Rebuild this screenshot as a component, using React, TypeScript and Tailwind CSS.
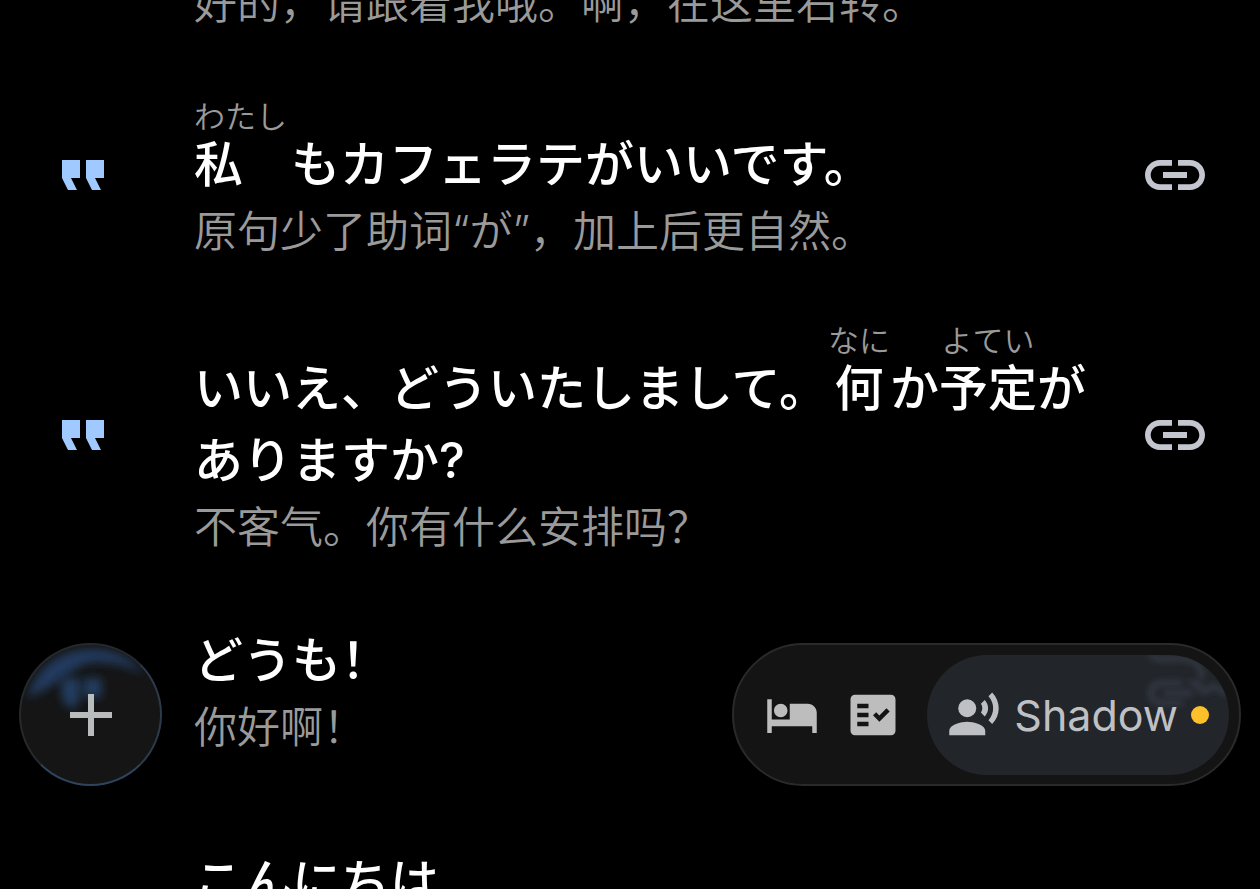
import type { ReactNode } from "react";
import { MdAdd, MdFactCheck, MdHotel, MdLink, MdRecordVoiceOver } from "react-icons/md";

type Entry = { id: string; phrase: ReactNode; translation?: string };

function Furigana({ reading, align = "text-center", children }: { reading: string; align?: string; children: ReactNode }) {
  return (
    <span className={`inline-block ${align}`}>
      <span className="block text-[31px] leading-6 font-[350] text-[#9a9a9a]">{reading}</span>
      <span className="block">{children}</span>
    </span>
  );
}

const entries: Entry[] = [
  {
    id: "latte",
    phrase: (
      <>
        <Furigana reading="わたし" align="mr-1 text-left">私</Furigana>
        もカフェラテがいいです。
      </>
    ),
    translation: "原句少了助词“が”，加上后更自然。",
  },
  {
    id: "plans",
    phrase: (
      <>
        いいえ、どういたしまして。
        <Furigana reading="なに">何</Furigana>か<Furigana reading="よてい">予定</Furigana>
        がありますか?
      </>
    ),
    translation: "不客气。你有什么安排吗？",
  },
  { id: "thanks", phrase: "どうも！", translation: "你好啊！" },
  { id: "hello", phrase: "こんにちは" },
];

function QuoteIcon() {
  return (
    <svg viewBox="0 0 24 24" className="size-[72px]" fill="currentColor" aria-hidden="true">
      <path d="M18 17h-3l-2-4V7h6v6h-3zM10 17H7l-2-4V7h6v6H8z" />
    </svg>
  );
}

function Row({ entry }: { entry: Entry }) {
  return (
    <li className="flex min-h-[170px] items-center pr-[49px] pl-[47px]">
      <button type="button" aria-label="Quote" className="mr-[75px] shrink-0 text-[#a0caff]">
        <QuoteIcon />
      </button>
      <div className="min-w-0 flex-1 self-start pt-4">
        <p className="text-[49px] leading-[72px] font-medium text-white">{entry.phrase}</p>
        {entry.translation && (
          <p className="text-[43px] leading-[60px] font-[350] text-[#9a9a9a]">{entry.translation}</p>
        )}
      </div>
      <a href="#link" aria-label="Link" className="ml-6 shrink-0 text-[#c4c6cf]">
        <MdLink className="size-[72px]" />
      </a>
    </li>
  );
}

function AddButton() {
  return (
    <button
      type="button"
      aria-label="Add"
      className="relative flex size-[143px] items-center justify-center overflow-hidden rounded-full border-2 border-[#26292c] border-r-[#2c3a4a] border-b-[#2f455f] bg-[#151515] text-[#b9bcbc]"
    >
      <svg viewBox="0 0 143 143" className="absolute inset-0 size-full" aria-hidden="true">
        <defs>
          <filter id="soften" x="-40%" y="-40%" width="180%" height="180%">
            <feGaussianBlur stdDeviation="5" />
          </filter>
        </defs>
        <path d="M6 54C18 18 45 4 72 4c24 0 42 8 54 26-18-10-36-13-54-12-18 3-32 24-66 36z" fill="#203a5e" filter="url(#soften)" />
        <path d="M42 34h18v20l-3 10h-9l-6-10zM65 34h18v20H65z" fill="#213c60" filter="url(#soften)" />
      </svg>
      <MdAdd className="relative size-[72px]" />
    </button>
  );
}

function ModeBar() {
  return (
    <div className="flex h-[143px] items-center rounded-full border-2 border-[#2a2a2a] bg-[#141414] pr-[10px] pl-[31px] text-[#bdbdbd]">
      <button type="button" aria-label="Rest">
        <MdHotel className="size-[54px]" />
      </button>
      <button type="button" aria-label="Checklist" className="ml-[27px]">
        <MdFactCheck className="size-[54px]" />
      </button>
      <button
        type="button"
        className="relative ml-[27px] flex h-[120px] items-center overflow-hidden rounded-full bg-[#22252a] px-5 text-[#bfc0c4]"
      >
        <svg viewBox="0 0 84 60" className="absolute top-0 right-0 h-[60px] w-[84px]" fill="none" stroke="#343b47" strokeWidth="5" aria-hidden="true">
          <defs>
            <filter id="soften-link" x="-20%" y="-20%" width="140%" height="140%">
              <feGaussianBlur stdDeviation="3" />
            </filter>
          </defs>
          <g filter="url(#soften-link)">
            <path d="M38 28H18q-12 0-12 10t12 10h20M18 38h30M44 28c16-2 10 16 20 6 4-6 10 0 18 6M4 0c12 8 24 2 36 4s18 8 16 20" />
          </g>
        </svg>
        <MdRecordVoiceOver className="relative size-[54px]" />
        <span className="relative ml-[13px] text-[43px] leading-[60px]">Shadow</span>
        <span className="relative ml-[13px] size-[18px] rounded-full bg-[#fdbf2a]" />
      </button>
    </div>
  );
}

export default function App() {
  return (
    <main lang="zh-CN" className="h-screen overflow-hidden bg-black font-[Inter,'Noto_Sans_CJK_SC',sans-serif]">
      <p className="-mt-[27px] mb-[56px] pl-[194px] text-[43px] leading-[60px] font-[350] text-[#9a9a9a]">
        好的，请跟着我哦。啊，在这里右转。
      </p>
      <ul className="flex flex-col gap-[52px]">
        {entries.map((entry) => (
          <Row key={entry.id} entry={entry} />
        ))}
      </ul>
      <div className="fixed inset-x-0 bottom-[103px] flex justify-between px-[19px]">
        <AddButton />
        <ModeBar />
      </div>
    </main>
  );
}
